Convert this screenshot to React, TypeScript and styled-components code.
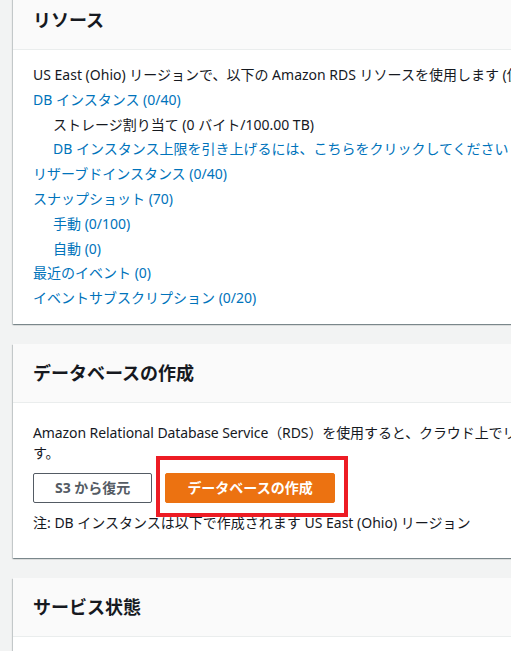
import React from 'react';
import styled, { createGlobalStyle } from 'styled-components';

const colors = {
    page: '#f2f3f3',
    headerBg: '#fafafa',
    divider: '#eaeded',
    text: '#16191f',
    link: '#0073bb',
    grey: '#545b64',
    orange: '#ec7211',
    annotation: '#ed1c24',
};

const GlobalStyle = createGlobalStyle`
    html, body {
        margin: 0;
        padding: 0;
        background: ${colors.page};
        overflow: hidden;
    }
    body {
        font-family: 'Noto Sans', 'Noto Sans CJK JP', sans-serif;
        font-size: 14px;
        color: ${colors.text};
    }
`;

const resourceLinks = [
    { label: 'DB インスタンス (0/40)', indent: false },
    { label: 'ストレージ割り当て (0 バイト/100.00 TB)', indent: true, plain: true },
    { label: 'DB インスタンス上限を引き上げるには、こちらをクリックしてください', indent: true },
    { label: 'リザーブドインスタンス (0/40)', indent: false },
    { label: 'スナップショット (70)', indent: false },
    { label: '手動 (0/100)', indent: true },
    { label: '自動 (0)', indent: true },
    { label: '最近のイベント (0)', indent: false },
    { label: 'イベントサブスクリプション (0/20)', indent: false },
];

export default function App() {
    return (
        <>
            <GlobalStyle />
            <Page>
                <Card>
                    <CardHeader>
                        <Heading>リソース</Heading>
                    </CardHeader>
                    <ResourceBody>
                        <ResourceLine>
                            US East (Ohio) リージョンで、以下の Amazon RDS リソースを使用します (使用量/クォータ)
                        </ResourceLine>
                        {resourceLinks.map((item) => (
                            <ResourceLine key={item.label} $indent={item.indent} $link={!item.plain}>
                                {item.label}
                            </ResourceLine>
                        ))}
                    </ResourceBody>
                </Card>

                <Card>
                    <CardHeader>
                        <Heading>データベースの作成</Heading>
                    </CardHeader>
                    <CreateBody>
                        <Description>
                            Amazon Relational Database Service（RDS）を使用すると、クラウド上でリレーショナルデータベースを簡単にセットアップ、運用、スケーリングできま
                            <br />
                            す。
                        </Description>
                        <ButtonRow>
                            <Button>S3 から復元</Button>
                            <Highlight>
                                <Button $primary>データベースの作成</Button>
                                <AnnotationBox />
                            </Highlight>
                        </ButtonRow>
                        <Note>注: DB インスタンスは以下で作成されます US East (Ohio) リージョン</Note>
                    </CreateBody>
                </Card>

                <Card>
                    <CardHeader>
                        <Heading>サービス状態</Heading>
                    </CardHeader>
                    <EmptyBody />
                </Card>
            </Page>
        </>
    );
}

const Page = styled.main`
    display: flex;
    flex-direction: column;
    gap: 20px;
    width: 1100px;
    margin-top: -9px;
    padding-left: 13px;
`;

const Card = styled.section`
    background: #ffffff;
    box-shadow: 0 1px 1px 0 rgba(0, 28, 36, 0.3), 1px 1px 1px 0 rgba(0, 28, 36, 0.15),
        -1px 1px 1px 0 rgba(0, 28, 36, 0.15);
`;

const CardHeader = styled.header`
    display: flex;
    align-items: center;
    height: 58px;
    padding: 0 20px;
    background: ${colors.headerBg};
    border-bottom: 1px solid ${colors.divider};
`;

const Heading = styled.h2`
    margin: 0;
    font-size: 18px;
    font-weight: 700;
    line-height: 22px;
    color: ${colors.text};
`;

const ResourceBody = styled.div`
    display: flex;
    flex-direction: column;
    padding: 13px 20px 13px;
`;

const ResourceLine = styled.div<{ $indent?: boolean; $link?: boolean }>`
    line-height: 24.8px;
    white-space: nowrap;
    padding-left: ${(p) => (p.$indent ? '20px' : '0')};
    color: ${(p) => (p.$link ? colors.link : colors.text)};
`;

const CreateBody = styled.div`
    padding: 20px 20px 25px;
    line-height: 20px;
`;

const Description = styled.p`
    margin: 0;
    white-space: nowrap;
    letter-spacing: -0.1px;
`;

const ButtonRow = styled.div`
    display: flex;
    align-items: center;
    gap: 13px;
    margin-top: 10px;
`;

const Button = styled.button<{ $primary?: boolean }>`
    font-family: inherit;
    font-size: 14px;
    font-weight: 700;
    line-height: 20px;
    padding: 4px 21px;
    border-radius: 2px;
    border: 1px solid ${(p) => (p.$primary ? colors.orange : colors.grey)};
    background: ${(p) => (p.$primary ? colors.orange : '#ffffff')};
    color: ${(p) => (p.$primary ? '#ffffff' : colors.grey)};
    cursor: pointer;
`;

const Highlight = styled.div`
    position: relative;
    display: flex;
`;

const AnnotationBox = styled.span`
    position: absolute;
    left: -9px;
    right: -13px;
    top: -17px;
    bottom: -14px;
    border: 4px solid ${colors.annotation};
    pointer-events: none;
`;

const Note = styled.p`
    margin: 10px 0 0;
`;

const EmptyBody = styled.div`
    height: 80px;
`;
